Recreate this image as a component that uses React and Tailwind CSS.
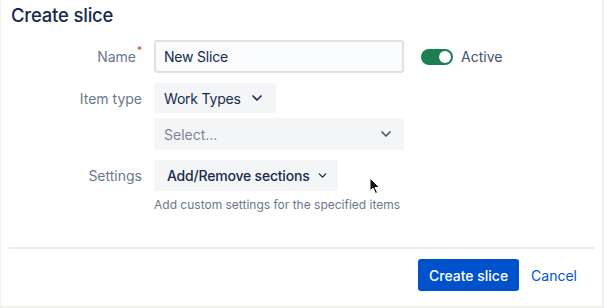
import { ChevronDown } from 'lucide-react'

export default function App() {
  return (
    <div
      className="w-[604px] h-[308px] bg-white border-r-2 border-b-2 border-l border-[#f0f0ee] relative text-[#172b4d] overflow-hidden"
      style={{ fontFamily: 'Inter, "Noto Sans", sans-serif' }}
    >
      <h1 className="pl-[10px] pt-[3px] text-[18.5px] font-medium leading-[24px] tracking-[-0.2px]">Create slice</h1>

      <div className="mt-[13px] grid grid-cols-[141px_1fr] gap-x-[12px] items-start whitespace-nowrap">
        <div className="flex justify-end pt-[6px] text-[14px] text-[#6b778c]">
          Name<span className="text-[#de350b] text-[10px] leading-none ml-[1px] -mt-[1px]">*</span>
        </div>
        <div className="flex items-center">
          <div className="w-[250px] h-[33px] rounded-[3px] border-2 border-[#dfe1e6] bg-[#fafbfc] flex items-center px-[8px] text-[14px] tracking-[-0.2px]">
            New Slice
          </div>
          <div className="ml-[17px] w-[32px] h-[16px] rounded-full bg-[#1c7f53] relative">
            <div className="absolute right-[2px] top-[2px] w-[12px] h-[12px] rounded-full bg-white" />
          </div>
          <span className="ml-[8px] text-[14px] text-[#42526e]">Active</span>
        </div>

        <div className="mt-[10px] flex justify-end pt-[5px] text-[14px] text-[#6b778c]">Item type</div>
        <div className="mt-[10px] flex flex-col gap-[5px]">
          <div className="w-[122px] h-[30px] rounded-[3px] bg-[#f4f5f7] flex items-center px-[10px] text-[14px] text-[#172b4d] tracking-[-0.2px]">
            Work Types
            <ChevronDown size={16} strokeWidth={2.5} className="ml-[8px] shrink-0" />
          </div>
          <div className="w-[250px] h-[32px] rounded-[3px] bg-[#f4f5f7] flex items-center justify-between pl-[10px] pr-[10px] text-[14px] text-[#7a869a]">
            Select...
            <ChevronDown size={16} strokeWidth={2.5} className="text-[#42526e] shrink-0" />
          </div>
        </div>

        <div className="mt-[10px] flex justify-end pt-[5px] text-[14px] text-[#6b778c]">Settings</div>
        <div className="mt-[10px] flex flex-col">
          <div className="w-[184px] h-[31px] rounded-[3px] bg-[#f4f5f7] flex items-center px-[13px] text-[14px] font-medium text-[#172b4d] tracking-[-0.2px]">
            Add/Remove sections
            <ChevronDown size={13} strokeWidth={2.5} className="ml-[6px] shrink-0" />
          </div>
          <div className="mt-[5px] text-[12px] text-[#6b778c]">Add custom settings for the specified items</div>
        </div>
      </div>

      <div className="mx-[8px] mt-[33px] h-[2px] bg-[#ebecf0]" />

      <div className="flex justify-end items-center pr-[23px] mt-[10px] gap-[10px]">
        <button className="h-[32px] w-[101px] rounded-[3px] bg-[#0052cc] text-white text-[14px] font-medium">Create slice</button>
        <button className="h-[32px] px-[2px] text-[#0052cc] text-[14px]">Cancel</button>
      </div>

      <svg className="absolute left-[368px] top-[177px]" width="12" height="18" viewBox="0 0 12 18">
        <path d="M1 1 L1 14 L4 11 L6.5 16.5 L8.5 15.5 L6 10.5 L10.5 10.5 Z" fill="#111" stroke="#fff" strokeWidth="1" />
      </svg>
    </div>
  )
}
